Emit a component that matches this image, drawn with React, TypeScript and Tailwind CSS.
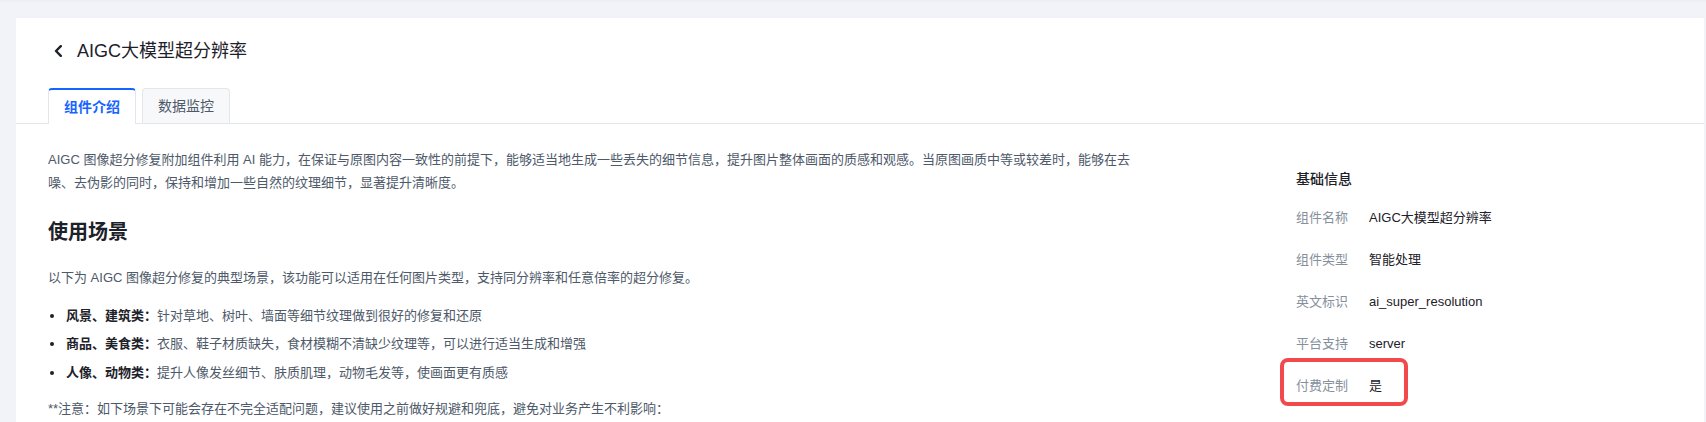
const font = "font-['Liberation_Sans','Noto_Sans_CJK_SC',sans-serif]";

const scenes = [
  { label: "风景、建筑类：", text: "针对草地、树叶、墙面等细节纹理做到很好的修复和还原" },
  { label: "商品、美食类：", text: "衣服、鞋子材质缺失，食材模糊不清缺少纹理等，可以进行适当生成和增强" },
  { label: "人像、动物类：", text: "提升人像发丝细节、肤质肌理，动物毛发等，使画面更有质感" },
];

const info = [
  { label: "组件名称", value: "AIGC大模型超分辨率" },
  { label: "组件类型", value: "智能处理" },
  { label: "英文标识", value: "ai_super_resolution" },
  { label: "平台支持", value: "server" },
  { label: "付费定制", value: "是", marked: true },
];

function BackIcon() {
  return (
    <svg width="9" height="12" viewBox="0 0 9 12" fill="none">
      <path d="M6.8 1.2 2 6l4.8 4.8" stroke="#1d2129" strokeWidth="2.4" strokeLinecap="round" strokeLinejoin="round" />
    </svg>
  );
}

export default function App() {
  return (
    <div className={`${font} min-h-screen bg-[#f2f3f8] pt-4 pl-4 pr-[2px] border-t-2 border-[#eceef3]`}>
      <div className="bg-white pb-16">
        {/* header */}
        <div className="flex items-center gap-[14px] pl-[38px] h-[66px]">
          <BackIcon />
          <h1 className="text-[18px] leading-[26px] text-[#1d2129]">AIGC大模型超分辨率</h1>
        </div>

        {/* tabs */}
        <div className="mt-[4px] flex gap-[6px] pl-8 border-b border-[#e5e6eb]">
          <button className="-mb-px h-[36px] w-[88px] rounded-t-[4px] border border-b-0 border-[#e5e6eb] border-t-2 border-t-[#1664ff] bg-white text-[14px] font-bold text-[#1664ff]">
            组件介绍
          </button>
          <button className="h-[35px] w-[88px] rounded-t-[4px] border border-b-0 border-[#e5e6eb] bg-[#f7f8fa] text-[14px] text-[#4e5969]">
            数据监控
          </button>
        </div>

        {/* body */}
        <div className="flex justify-between pl-8 pr-8 pt-6">
          <div className="w-[1088px] text-[13px] leading-[23.4px] text-[#4e5969]">
            <p>
              AIGC 图像超分修复附加组件利用 AI 能力，在保证与原图内容一致性的前提下，能够适当地生成一些丢失的细节信息，提升图片整体画面的质感和观感。当原图画质中等或较差时，能够在去噪、去伪影的同时，保持和增加一些自然的纹理细节，显著提升清晰度。
            </p>
            <h2 className="mt-[23.5px] text-[20px] leading-[28px] font-bold text-[#1d2129]">使用场景</h2>
            <p className="mt-[19.7px]">
              以下为 AIGC 图像超分修复的典型场景，该功能可以适用在任何图片类型，支持同分辨率和任意倍率的超分修复。
            </p>
            <ul className="mt-[14.6px] flex flex-col gap-[5px]">
              {scenes.map((s) => (
                <li key={s.label} className="flex items-center">
                  <span className="ml-[2px] mr-[12px] h-[4px] w-[4px] rounded-full bg-[#1d2129]" />
                  <span>
                    <b className="font-bold text-[#1d2129]">{s.label}</b>
                    {s.text}
                  </span>
                </li>
              ))}
            </ul>
            <p className="mt-[13.2px]">
              **注意：如下场景下可能会存在不完全适配问题，建议使用之前做好规避和兜底，避免对业务产生不利影响：
            </p>
          </div>

          <div className="w-[376px] pt-5 text-[13px]">
            <div className="h-[22px] leading-[22px] text-[14px] font-medium text-[#1d2129]">基础信息</div>
            <div className="mt-[7px]">
              {info.map((r) => (
                <div key={r.label} className="relative flex h-[42px] items-center">
                  <span className="w-[73px] text-[#86909c]">{r.label}</span>
                  <span className="text-[#1d2129]">{r.value}</span>
                  {r.marked && (
                    <div className="absolute -left-4 -top-[7px] h-[48px] w-[128px] rounded-[8px] border-4 border-[#f24a4a]" />
                  )}
                </div>
              ))}
            </div>
          </div>
        </div>
      </div>
    </div>
  );
}
